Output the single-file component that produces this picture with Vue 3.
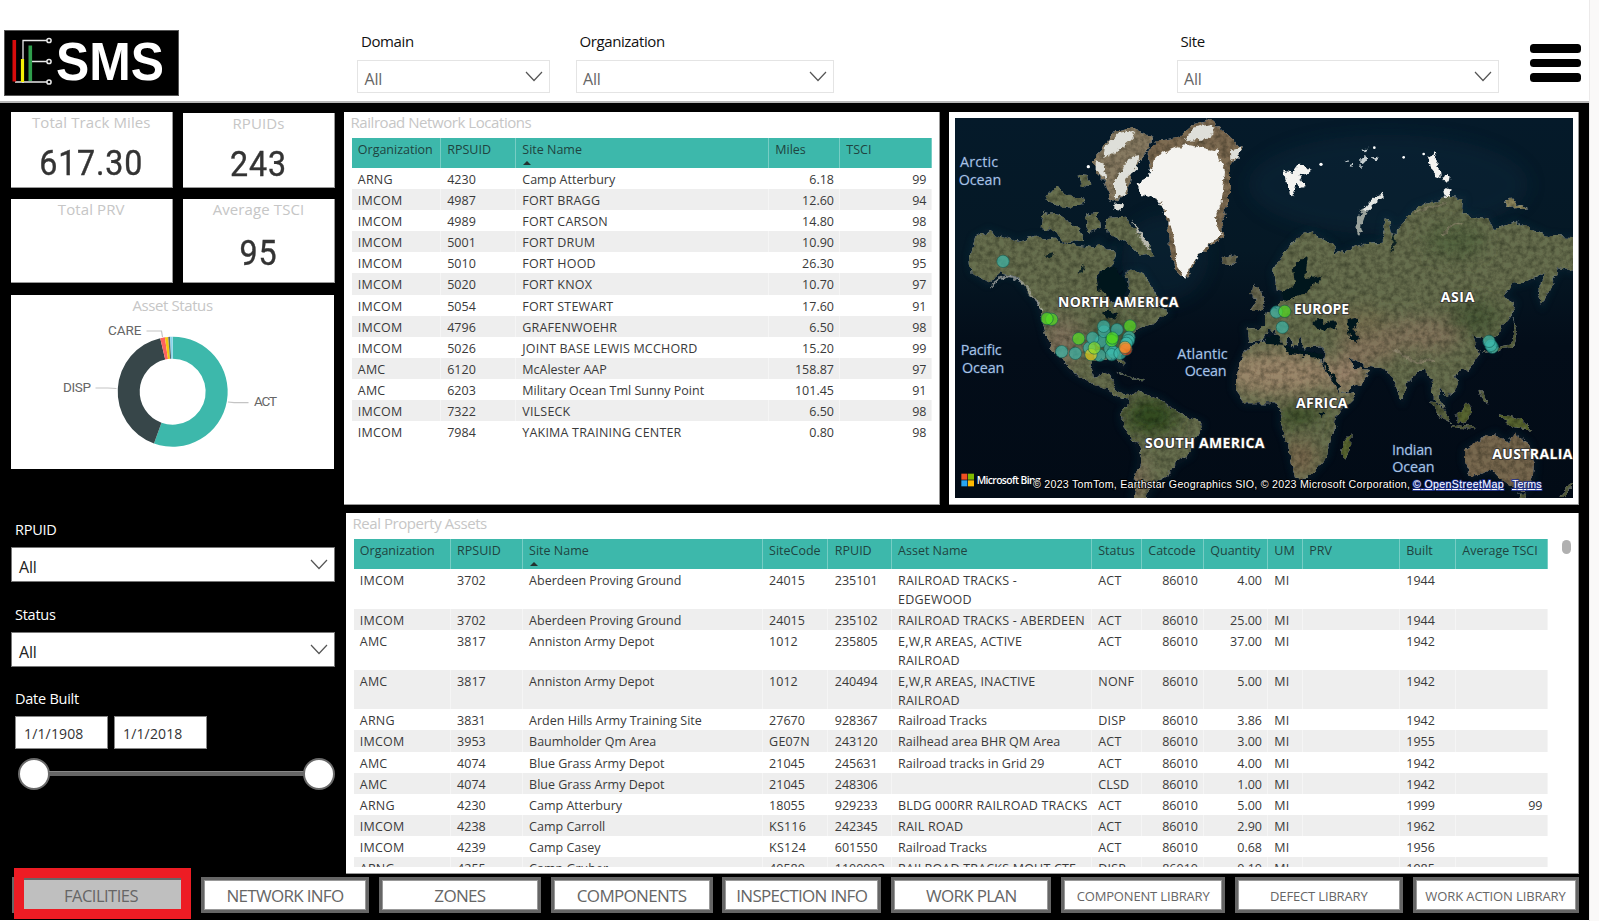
<script setup>
const headerSlicers = [
  { label: 'Domain', cls: 'domain' },
  { label: 'Organization', cls: 'organization' },
  { label: 'Site', cls: 'site' },
]

const cards = [
  { title: 'Total Track Miles', value: '617.30' },
  { title: 'RPUIDs', value: '243' },
  { title: 'Total PRV', value: '' },
  { title: 'Average TSCI', value: '95' },
]

function arc(from, to) {
  const pt = (deg, r) => {
    const a = (deg * Math.PI) / 180
    return `${(161.7 + r * Math.sin(a)).toFixed(2)} ${(96.7 - r * Math.cos(a)).toFixed(2)}`
  }
  const large = to - from > 180 ? 1 : 0
  return `M${pt(from, 55)}A55 55 0 ${large} 1 ${pt(to, 55)}L${pt(to, 33)}A33 33 0 ${large} 0 ${pt(from, 33)}Z`
}
const slices = [
  { d: arc(0, 199.9), color: '#3db8ab' },
  { d: arc(199.9, 346.9), color: '#374649' },
  { d: arc(346.9, 351.8), color: '#fd625e' },
  { d: arc(351.8, 355.3), color: '#f2c80f' },
  { d: arc(355.3, 357.3), color: '#5f6b6d' },
  { d: arc(357.3, 359.9), color: '#8ad4eb' },
]

const networkCols = ['Organization', 'RPSUID', 'Site Name', 'Miles', 'TSCI']
const networkRows = [
  ['ARNG', '4230', 'Camp Atterbury', '6.18', '99'],
  ['IMCOM', '4987', 'FORT BRAGG', '12.60', '94'],
  ['IMCOM', '4989', 'FORT CARSON', '14.80', '98'],
  ['IMCOM', '5001', 'FORT DRUM', '10.90', '98'],
  ['IMCOM', '5010', 'FORT HOOD', '26.30', '95'],
  ['IMCOM', '5020', 'FORT KNOX', '10.70', '97'],
  ['IMCOM', '5054', 'FORT STEWART', '17.60', '91'],
  ['IMCOM', '4796', 'GRAFENWOEHR', '6.50', '98'],
  ['IMCOM', '5026', 'JOINT BASE LEWIS MCCHORD', '15.20', '99'],
  ['AMC', '6120', 'McAlester AAP', '158.87', '97'],
  ['AMC', '6203', 'Military Ocean Tml Sunny Point', '101.45', '91'],
  ['IMCOM', '7322', 'VILSECK', '6.50', '98'],
  ['IMCOM', '7984', 'YAKIMA TRAINING CENTER', '0.80', '98'],
]

const assetCols = ['Organization', 'RPSUID', 'Site Name', 'SiteCode', 'RPUID', 'Asset Name', 'Status', 'Catcode', 'Quantity', 'UM', 'PRV', 'Built', 'Average TSCI']
const assetRows = [
  ['IMCOM', '3702', 'Aberdeen Proving Ground', '24015', '235101', 'RAILROAD TRACKS -\nEDGEWOOD', 'ACT', '86010', '4.00', 'MI', '', '1944', ''],
  ['IMCOM', '3702', 'Aberdeen Proving Ground', '24015', '235102', 'RAILROAD TRACKS - ABERDEEN', 'ACT', '86010', '25.00', 'MI', '', '1944', ''],
  ['AMC', '3817', 'Anniston Army Depot', '1012', '235805', 'E,W,R AREAS, ACTIVE\nRAILROAD', 'ACT', '86010', '37.00', 'MI', '', '1942', ''],
  ['AMC', '3817', 'Anniston Army Depot', '1012', '240494', 'E,W,R AREAS, INACTIVE\nRAILROAD', 'NONF', '86010', '5.00', 'MI', '', '1942', ''],
  ['ARNG', '3831', 'Arden Hills Army Training Site', '27670', '928367', 'Railroad Tracks', 'DISP', '86010', '3.86', 'MI', '', '1942', ''],
  ['IMCOM', '3953', 'Baumholder Qm Area', 'GE07N', '243120', 'Railhead area BHR QM Area', 'ACT', '86010', '3.00', 'MI', '', '1955', ''],
  ['AMC', '4074', 'Blue Grass Army Depot', '21045', '245631', 'Railroad tracks in Grid 29', 'ACT', '86010', '4.00', 'MI', '', '1942', ''],
  ['AMC', '4074', 'Blue Grass Army Depot', '21045', '248306', '', 'CLSD', '86010', '1.00', 'MI', '', '1942', ''],
  ['ARNG', '4230', 'Camp Atterbury', '18055', '929233', 'BLDG 000RR RAILROAD TRACKS', 'ACT', '86010', '5.00', 'MI', '', '1999', '99'],
  ['IMCOM', '4238', 'Camp Carroll', 'KS116', '242345', 'RAIL ROAD', 'ACT', '86010', '2.90', 'MI', '', '1962', ''],
  ['IMCOM', '4239', 'Camp Casey', 'KS124', '601550', 'Railroad Tracks', 'ACT', '86010', '0.68', 'MI', '', '1956', ''],
  ['ARNG', '4255', 'Camp Gruber', '40580', '1100003', 'RAILROAD TRACKS MOUT CTF', 'DISP', '86010', '0.10', 'MI', '', '1985', ''],
]
const rightAligned = [7, 8, 12]
const isCaps = (s) => /[A-Z]/.test(s) && !/[a-z]/.test(s)

const T = '#3db8ab'
const G = '#52e020'
const pins = [
  [144, 430, T], [290, 604, G], [276, 602, G],
  [371, 662, G], [320, 701, T], [361, 706, T],
  [403, 690, T], [434, 712, T], [438, 670, T], [447, 640, T], [446, 625, T], [413, 660, T],
  [486, 635, T], [525, 624, G], [408, 710, '#e8d21a'], [418, 690, '#8fe02a'],
  [465, 692, T], [475, 702, T], [470, 710, T], [495, 706, T], [470, 668, G], [472, 660, G],
  [522, 658, T], [520, 668, T], [514, 676, T], [513, 694, '#ff4a20'], [510, 688, '#ff9a2a'],
  [964, 582, T], [989, 580, G], [982, 628, T],
  [1612, 688, T], [1608, 682, T], [1602, 670, T],
]

const tabs = [
  { text: 'NETWORK INFO' }, { text: 'ZONES' }, { text: 'COMPONENTS' }, { text: 'INSPECTION INFO' }, { text: 'WORK PLAN' },
  { text: 'COMPONENT LIBRARY', small: true }, { text: 'DEFECT LIBRARY', small: true }, { text: 'WORK ACTION LIBRARY', small: true },
]
</script>

<template>
  <div class="page">
    <header class="top">
      <svg class="logo" width="175" height="66" viewBox="0 0 175 66">
        <rect x=".5" y=".5" width="174" height="65" fill="#000" stroke="#555" />
        <path d="M19 53V10.500H43M28 31.500H43M11 52H43" fill="none" stroke="#e8e8e8" stroke-width="1.300" />
        <path d="M10.300 10V51.500" stroke="#d80c0c" stroke-width="3.600" />
        <path d="M18.500 29V52" stroke="#f3ee05" stroke-width="3.200" />
        <path d="M26.300 15.500V51" stroke="#2f9e4c" stroke-width="3.600" />
        <g fill="#000" stroke="#e8e8e8" stroke-width="1.500"><circle cx="45" cy="10.500" r="2.100" /><circle cx="45" cy="31.500" r="2.100" /><circle cx="45" cy="52" r="2.100" /></g>
        <text class="logo-text" x="52" y="49.500" textLength="108" lengthAdjust="spacingAndGlyphs">SMS</text>
      </svg>
      <div v-for="s in headerSlicers" :key="s.label" class="hs" :class="s.cls">
        <span class="hs-label">{{ s.label }}</span>
        <div class="hs-box"><span>All</span><svg width="18" height="11" viewBox="0 0 18 11"><path d="M1 1L9 9.500L17 1" /></svg></div>
      </div>
      <div class="burger"><i></i><i></i><i></i></div>
    </header>

    <main class="body">
      <div class="upper">
        <aside class="side">
          <div class="cards">
            <section v-for="c in cards" :key="c.title" class="card">
              <h3>{{ c.title }}</h3>
              <strong>{{ c.value }}</strong>
            </section>
          </div>
          <section class="donut">
            <h3>Asset Status</h3>
            <svg width="323" height="174" viewBox="0 0 323 174">
              <path v-for="s in slices" :key="s.color" :d="s.d" :fill="s.color" />
              <g fill="none" stroke="#c4c4c4" stroke-width="1.200"><path d="M135.500 36H150.500L151.500 42" /><path d="M84.500 93H97L105.500 93.500" /><path d="M217 107L223 107.700H237.500" /></g>
              <g class="donut-label"><text x="97" y="40" textLength="33.500">CARE</text><text x="52" y="97" textLength="28">DISP</text><text x="243" y="111" textLength="23">ACT</text></g>
            </svg>
          </section>
          <div class="slicer"><label>RPUID</label><div class="select"><span>All</span><svg width="18" height="11" viewBox="0 0 18 11"><path d="M1 1L9 9.500L17 1" /></svg></div></div>
          <div class="slicer status"><label>Status</label><div class="select"><span>All</span><svg width="18" height="11" viewBox="0 0 18 11"><path d="M1 1L9 9.500L17 1" /></svg></div></div>
          <div class="slicer dates">
            <label>Date Built</label>
            <div class="inputs"><span>1/1/1908</span><span>1/1/2018</span></div>
            <div class="slider"><b></b><i></i><b></b></div>
          </div>
        </aside>

        <div class="right">
          <div class="row1">
            <section class="panel network">
              <h2>Railroad Network Locations</h2>
              <div class="grid g1 head">
                <div v-for="(c, i) in networkCols" :key="c">{{ c }}<em v-if="i === 2"></em></div>
              </div>
              <div v-for="(r, n) in networkRows" :key="n" class="grid g1 line" :class="{ band: n % 2 }">
                <div v-for="(c, i) in r" :key="i" :class="{ num: i > 2, caps: isCaps(c) }">{{ c }}</div>
              </div>
            </section>

            <section class="panel map">
              <svg width="618" height="380" viewBox="0 0 1854 1140">
                <defs>
                  <linearGradient id="sea" x1="0" y1="0" x2="0" y2="1"><stop offset="0" stop-color="#051a2a" /><stop offset=".35" stop-color="#051825" /><stop offset=".6" stop-color="#030d19" /><stop offset="1" stop-color="#020b16" /></linearGradient>
                  <filter id="terrain" x="0" y="0" width="1854" height="1140" filterUnits="userSpaceOnUse" color-interpolation-filters="sRGB">
                    <feTurbulence type="fractalNoise" baseFrequency=".035" numOctaves="4" seed="4" result="n" />
                    <feDisplacementMap in="SourceGraphic" in2="n" scale="26" xChannelSelector="R" yChannelSelector="G" result="d" />
                    <feTurbulence type="fractalNoise" baseFrequency=".06" numOctaves="5" seed="9" />
                    <feColorMatrix values="0 .7 0 0 .56  0 .65 0 0 .57  0 .7 0 0 .54  0 0 0 0 1" result="g" />
                    <feBlend in="d" in2="g" mode="multiply" result="m" />
                    <feComposite in="m" in2="d" operator="in" result="c" />
                    <feGaussianBlur in="c" stdDeviation="1.200" />
                  </filter>
                  <filter id="edge" x="0" y="0" width="1854" height="1140" filterUnits="userSpaceOnUse">
                    <feTurbulence type="fractalNoise" baseFrequency=".06" numOctaves="3" seed="7" result="n" />
                    <feDisplacementMap in="SourceGraphic" in2="n" scale="20" xChannelSelector="R" yChannelSelector="G" result="d" />
                    <feGaussianBlur in="d" stdDeviation="1.500" />
                  </filter>
                  <filter id="soft" x="-50%" y="-50%" width="200%" height="200%"><feGaussianBlur stdDeviation="26" /></filter>
                  <filter id="haze" x="-50%" y="-50%" width="200%" height="200%"><feGaussianBlur stdDeviation="10" /></filter>
                  <path id="namerica" d="M60 361L100 339L190 371L240 356L300 366L350 381L410 391L430 372L445 392L480 391L470 441L430 461L425 501L470 546L500 561L520 521L515 461L560 461L600 521L610 556L640 586L590 616L545 636L520 676L500 706L503 753L488 720L450 726L400 726L420 776L460 766L475 796L480 816L518 831L518 846L490 836L460 816L410 796L350 761L320 726L280 676L270 636L250 556L220 521L185 476L140 466L100 496L50 461L45 416Z" />
                  <path id="samerica" d="M518 836L550 821L620 846L670 886L740 916L738 930L710 976L705 1010L660 1036L640 1070L610 1086L580 1126L575 1150H530L555 1016L545 976L505 926L497 891L520 856Z" />
                  <path id="africa" d="M875 691L840 766L840 816L870 856L960 856L980 866L975 916L995 966L1020 1076L1060 1080L1115 1016L1135 936L1140 896L1190 846L1202 819L1155 826L1100 731L1095 711L1000 696L980 666L930 671Z" />
                  <path id="eurasia" d="M955 461L990 401L1030 356L1070 341L1135 381L1137 409L1170 401L1230 376L1280 371L1292 301L1304 305L1310 350L1350 311L1380 271L1475 236L1525 241L1520 291L1600 301L1620 336L1680 311L1780 356L1870 361V461L1810 451L1780 521L1762 560L1750 531L1770 466L1720 490L1670 501L1645 536L1680 556L1670 586L1630 646L1614 660L1616 698L1600 690L1580 661L1555 656L1572 711L1540 756L1500 771L1505 811L1475 836L1450 811L1468 876L1435 836L1430 786L1400 761L1360 796L1342 846L1315 786L1290 751L1230 746L1180 716L1200 751L1245 756L1220 796L1158 824L1130 776L1105 731L1110 685L1045 688L1035 660L1020 692L994 652L988 684L955 640L936 635L920 671L880 671L875 631L930 630L930 596L975 560L1000 525L962 516Z" />
                  <path id="australia" d="M1530 996L1580 966L1620 946L1650 971L1670 971L1680 946L1720 976L1740 1036L1735 1086L1710 1121L1670 1106L1630 1076L1610 1056L1550 1076L1530 1036Z" />
                  <clipPath id="land"><use href="#namerica" /><use href="#samerica" /><use href="#africa" /><use href="#eurasia" /><use href="#australia" /></clipPath>
                </defs>
                <rect width="1854" height="1140" fill="url(#sea)" />
                <g fill="#0d2c3e" opacity=".4" filter="url(#soft)"><ellipse cx="1300" cy="200" rx="420" ry="150" /><ellipse cx="630" cy="420" rx="130" ry="130" /></g>
                <g fill="none" stroke="#0e3342" stroke-width="16" opacity=".35" filter="url(#haze)"><use href="#namerica" /><use href="#samerica" /><use href="#africa" /><use href="#eurasia" /><use href="#australia" /></g>
                <g filter="url(#terrain)">
                  <g fill="#666f4e">
                    <use href="#namerica" /><use href="#samerica" /><use href="#africa" /><use href="#eurasia" /><use href="#australia" fill="#77694f" />
                    <path d="M265 281L310 291L370 331L390 361L340 376L280 331L260 326ZM275 235L300 205L350 235L395 240L380 265L330 270L280 250ZM370 170L400 175L410 205L380 200ZM390 290L430 280L435 330L400 345ZM450 300L510 296L560 351L595 411L560 416L515 371L460 351Z" />
                    <path d="M895 500L915 515L935 565L925 580L885 578L905 550L890 530ZM800 418L825 407L850 422L825 440L805 435Z" fill="#686850" />
                    <path d="M1160 976L1187 946L1185 986L1170 1026L1152 1008ZM1505 890L1540 856L1556 876L1530 916L1505 911ZM1630 890L1700 906L1732 936L1670 926Z" fill="#56642f" />
                    <path d="M1420 846L1440 850L1490 905L1485 915L1460 900ZM1490 918L1565 930L1563 937L1488 925ZM1570 820L1585 830L1600 860L1585 855ZM1580 710L1620 690L1660 680L1676 640L1668 600L1686 640L1674 686L1625 700ZM1810 1140L1830 1115L1854 1100V1110L1825 1140ZM1690 1130L1712 1130L1700 1150Z" fill="#56603f" />
                    <path d="M480 758L520 772L570 784L560 790L500 770Z" fill="#4f5f45" />
                    <path d="M440 91L480 41L530 31L595 56L570 111L530 161L515 231L470 251L450 191L420 161L420 111Z" fill="#867b62" />
                    <path d="M600 71L670 56L710 21L770 6L820 51L860 91L825 141L825 261L800 311L805 356L740 401L690 481L660 451L645 391L640 311L610 246L575 111Z" fill="#7d6c52" />
                    <path d="M1650 248L1670 242L1685 262L1700 258L1720 268L1695 270L1660 272Z" fill="#8e8a60" />
                  </g>
                  <g clip-path="url(#land)" filter="url(#soft)">
                    <ellipse cx="970" cy="765" rx="175" ry="65" fill="#9a876b" /><ellipse cx="1175" cy="770" rx="60" ry="50" fill="#98836a" />
                    <ellipse cx="1240" cy="690" rx="90" ry="42" fill="#85765d" /><ellipse cx="1400" cy="650" rx="120" ry="48" fill="#81745c" /><ellipse cx="1210" cy="610" rx="90" ry="30" fill="#767050" />
                    <ellipse cx="320" cy="670" rx="60" ry="70" fill="#7d715c" /><ellipse cx="1040" cy="1020" rx="45" ry="55" fill="#7c6b50" /><ellipse cx="540" cy="1090" rx="34" ry="70" fill="#84755e" />
                    <ellipse cx="590" cy="895" rx="80" ry="52" fill="#2e491f" /><ellipse cx="1030" cy="890" rx="65" ry="35" fill="#3a4f26" /><ellipse cx="470" cy="650" rx="60" ry="50" fill="#414f36" /><ellipse cx="1500" cy="370" rx="90" ry="50" fill="#526541" /><ellipse cx="1560" cy="600" rx="80" ry="50" fill="#485a39" />
                  </g>
                  <path d="M110 505Q150 460 190 485T260 580" fill="none" stroke="#b4b8ae" stroke-width="7" opacity=".7" />
                  <path d="M1380 285Q1420 270 1480 260M1460 350Q1500 310 1520 320" fill="none" stroke="#8f8c70" stroke-width="8" opacity=".7" />
                  <path d="M1320 690Q1350 735 1440 728" fill="none" stroke="#9a917c" stroke-width="7" opacity=".6" />
                </g>
                <g fill="#05131d" filter="url(#edge)">
                  <path d="M1036 421H1058L1050 481L1100 471L1092 490L1040 528L990 551L980 525L1020 500L1014 450Z" />
                  <path d="M1075 618L1090 600L1110 615L1140 610L1145 630L1090 636ZM1178 606L1200 600L1208 620L1195 635L1212 660L1205 672L1188 665L1178 630Z" />
                  <path d="M930 655L970 650L985 680L1045 700L1110 705L1105 725L1060 715L1000 708L985 680L935 678Z" />
                  <path d="M1103 735L1112 732L1155 805L1150 820ZM425 480L440 455L475 445L500 465L520 500L500 556L460 540L430 515Z" />
                  <path d="M440 585Q460 570 490 590L480 605L455 595ZM1094 886L1104 884L1104 897L1096 900Z" />
                  <path d="M270 410L300 402L296 418L280 424ZM370 465L378 448L390 440L382 462ZM1315 340L1322 370L1312 402L1308 380Z" fill="#0c2024" />
                </g>
                <g fill="#f4f3f0" filter="url(#edge)">
                  <path d="M610 111L690 79L790 99L810 161L800 251L780 301L800 350L740 401L710 441L690 481L665 441L660 361L635 291L610 246L560 231L545 196L580 176L590 141Z" />
                  <path d="M825 98L862 88L850 120L826 130ZM450 85L490 45L540 35L530 65L480 105L445 120ZM520 120L555 110L545 150L510 180L515 230L480 240L480 190ZM425 125L445 140L455 185L425 160ZM475 257L505 255L500 275L475 272ZM710 30L770 18L780 45L740 65L690 70Z" fill="#dedfd9" />
                  <path d="M530 310L550 330L590 395L570 385Z" fill="#b9b9ae" />
                  <path d="M985 155L1000 158L1012 165L1030 140L1055 142L1068 155L1050 172L1030 170L1040 190L1052 200L1044 212L1024 200L1015 235L1005 228L1000 205L988 185ZM1418 118L1436 106L1446 130L1440 145L1458 155L1460 178L1444 172L1430 155ZM1460 190L1472 168L1486 185L1478 198ZM1465 220L1475 210L1490 216L1486 234L1470 240Z" />
                  <path d="M1165 128L1185 124L1180 132ZM1182 142L1198 136L1192 147ZM1212 128L1230 110L1238 125L1218 136ZM1222 95L1238 92L1232 106ZM1250 118L1272 116L1260 130ZM1210 146L1225 144L1218 150Z" fill="#c6ced0" />
                  <path d="M1216 346Q1202 318 1230 275" fill="none" stroke="#99a19b" stroke-width="14" />
                  <path d="M1232 278Q1250 250 1284 232" fill="none" stroke="#e2e5e2" stroke-width="13" />
                </g>
                <g fill="#fff"><circle cx="1098" cy="139" r="5" /><circle cx="1346" cy="118" r="4" /><circle cx="1406" cy="108" r="4" /><circle cx="1258" cy="89" r="4" /><circle cx="400" cy="146" r="5" /></g>
                <g stroke-width="3"><circle v-for="(p, i) in pins" :key="i" :cx="p[0]" :cy="p[1]" r="18.500" :fill="p[2]" class="pin" /></g>
                <g class="ocean">
                  <text x="15" y="148" textLength="114">Arctic</text><text x="11" y="200" textLength="128">Ocean</text>
                  <text x="17" y="712" textLength="123">Pacific</text><text x="21" y="764" textLength="127">Ocean</text>
                  <text x="667" y="723" textLength="151">Atlantic</text><text x="689" y="775" textLength="126">Ocean</text>
                  <text x="1311" y="1010" textLength="122">Indian</text><text x="1312" y="1062" textLength="127">Ocean</text>
                </g>
                <g class="continent">
                  <text x="309" y="566" textLength="361">NORTH AMERICA</text><text x="1017" y="588" textLength="165">EUROPE</text><text x="1457" y="551" textLength="101">ASIA</text>
                  <text x="1023" y="871" textLength="154">AFRICA</text><text x="570" y="991" textLength="358">SOUTH AMERICA</text><text x="1612" y="1024" textLength="240">AUSTRALIA</text>
                </g>
                <g><rect x="19" y="1067" width="18" height="18" fill="#f25022" /><rect x="39" y="1067" width="18" height="18" fill="#7fba00" /><rect x="19" y="1087" width="18" height="18" fill="#29a4ef" /><rect x="39" y="1087" width="18" height="18" fill="#ffb900" /></g>
                <text class="bing" x="65" y="1097" textLength="192">Microsoft Bing</text>
                <g class="credit">
                  <text x="234" y="1110" textLength="1131">© 2023 TomTom, Earthstar Geographics SIO, © 2023 Microsoft Corporation,</text>
                  <text x="1374" y="1110" textLength="272" class="link">© OpenStreetMap</text><text x="1671" y="1110" textLength="89" class="link">Terms</text>
                </g>
              </svg>
            </section>
          </div>

          <section class="panel assets">
            <h2>Real Property Assets</h2>
            <div class="assets-body">
              <div class="scroll">
                <div class="grid g2 head">
                  <div v-for="(c, i) in assetCols" :key="c">{{ c }}<em v-if="i === 2"></em></div>
                </div>
                <div v-for="(r, n) in assetRows" :key="n" class="grid g2 line" :class="{ tall: r[5].includes('\n'), band: n % 2 }">
                  <div v-for="(c, i) in r" :key="i" :class="{ num: rightAligned.includes(i), caps: isCaps(c) }">{{ c }}</div>
                </div>
              </div>
              <span class="thumb"></span>
            </div>
          </section>
        </div>
      </div>

      <nav class="tabs">
        <div class="active"><span>FACILITIES</span></div>
        <div v-for="t in tabs" :key="t.text" class="tab" :class="{ small: t.small }"><span>{{ t.text }}</span></div>
      </nav>
    </main>
  </div>
</template>

<style>
body { background: #faf9f8; overflow: hidden; }
</style>
<style scoped>
.page { width: 1590px; height: 921px; background: #fff; font-family: "Open Sans", "Noto Sans", sans-serif; box-sizing: border-box; border-right: 1px solid #eceaea; }
h2, h3 { margin: 0; font-weight: 400; color: #c6c6c6; font-size: 15px; letter-spacing: -.44px; white-space: nowrap; }
.top { height: 103px; box-sizing: border-box; border-bottom: 2px solid #b8b8b8; display: flex; align-items: flex-start; }
.logo { margin: 30px 0 0 4px; }
.logo-text { font: 700 53px "Liberation Sans", Arial, sans-serif; fill: #fff; }
.hs { margin-top: 30px; }
.hs-label { display: block; height: 22px; line-height: 22px; padding-left: 4px; font-size: 15px; letter-spacing: -.4px; color: #111; }
.hs-box { margin-top: 8px; height: 33px; box-sizing: border-box; border: 1px solid #e4e4e4; display: flex; align-items: center; justify-content: space-between; padding: 4px 6px 0 6.500px; font-size: 16px; letter-spacing: -.2px; color: #666; }
.hs-box svg { margin-top: -4px; }
.hs-box path, .select path { fill: none; stroke: #555; stroke-width: 1.2; }
.domain { margin-left: 178px; width: 193px; }
.organization { margin-left: 25.500px; width: 258px; }
.site { margin-left: 343px; width: 322.500px; }
.burger { margin: 44px 0 0 30.500px; width: 51px; display: flex; flex-direction: column; gap: 6px; }
.burger i { height: 8.500px; border-radius: 3.500px; background: #000; }
.body { width: 1589px; height: 817px; background: #000; }
.upper { display: flex; height: 774px; }
.side { width: 344px; padding: 9px 9px 0 11px; box-sizing: border-box; display: flex; flex-direction: column; }
.cards { display: grid; grid-template-columns: 161.500px 152px; grid-template-rows: 76px 84px; gap: 11px 10.500px; }
.card { background: #fff; text-align: center; border: solid #999; border-width: 0 1px 1px 0; box-sizing: border-box; }
.card h3 { line-height: 21px; letter-spacing: .1px; }
.card:nth-child(2) { margin-top: 1px; }
.card strong { display: block; margin-top: 10px; font: 400 35px/41px Roboto, sans-serif; letter-spacing: .9px; color: #333; transform: scaleX(.92); -webkit-text-stroke: .4px #333; }
.card:nth-child(4) strong { margin-top: 13px; }
.donut { margin-top: 12px; width: 323px; height: 174px; background: #fff; position: relative; }
.donut h3 { position: absolute; top: 0; left: 0; width: 100%; text-align: center; line-height: 21px; letter-spacing: -.4px; }
.donut-label { font: 400 13.500px Roboto, sans-serif; fill: #666; }
.slicer { margin-top: 50px; color: #fff; width: 324px; }
.slicer label { display: block; padding-left: 4px; height: 22px; line-height: 22px; font-size: 14.500px; letter-spacing: -.25px; }
.select { margin-top: 6px; height: 35px; box-sizing: border-box; background: #fff; border: 1px solid #777; display: flex; align-items: center; justify-content: space-between; padding: 4px 6px 0 7px; color: #222; font-size: 16px; letter-spacing: -.2px; }
.select svg { margin-top: -4px; }
.status { margin-top: 22px; }
.dates { margin-top: 21px; }
.inputs { margin: 6px 0 0 4px; display: flex; gap: 6px; }
.inputs span { width: 93px; height: 33px; box-sizing: border-box; background: #fff; border: 1px solid #888; color: #333; font-size: 14px; line-height: 33px; padding-left: 8px; letter-spacing: .15px; }
.slider { margin: 9px 0 0 7px; height: 32px; display: flex; align-items: center; }
.slider b { flex: none; width: 32px; height: 32px; box-sizing: border-box; border: 2px solid #6a6a6a; border-radius: 50%; background: #fff; }
.slider i { flex: 1; height: 5px; background: #666; margin: -1px -1px 0; border-top: 1px solid #888; box-sizing: border-box; }
.right { width: 1235px; padding-top: 9px; }
.row1 { display: flex; gap: 9px; height: 393px; }
.panel { background: #fff; box-sizing: border-box; border: solid #999; border-width: 0 1px 1px 0; }
.network { width: 596px; padding: 0 0 0 7.500px; }
.panel h2 { height: 26px; line-height: 21px; margin-left: -1px; }
.map { width: 630px; padding: 6px; }
.map svg { display: block; overflow: hidden; }
.grid { display: grid; width: max-content; font-size: 12.500px; color: #3a3a3a; }
.grid > div { box-sizing: border-box; padding: 1px 6px 0 6.300px; line-height: 21px; white-space: pre; overflow: hidden; border-right: 1px solid rgba(255, 255, 255, .4); }
.grid > .caps { letter-spacing: .2px; }
.g1 { grid-template-columns: 89.400px 75.100px 253px 71px 92.500px; }
.band { background: #eee; }
.line { height: 21.100px; }
.head { height: 30px; background: #3db8ab; }
.grid.head { color: #1f4440; }
.grid.head > div { line-height: 23px; padding-top: 0; position: relative; border-right-color: rgba(255, 255, 255, .3); }
.head em { position: absolute; left: 7px; top: 23px; border: 4px solid transparent; border-top: 0; border-bottom: 4px solid #24312f; }
.grid > .num { text-align: right; padding-right: 5px; }
.assets { margin: 8px 0 0 2px; width: 1233px; height: 361px; padding-left: 7.500px; }
.assets-body { display: flex; gap: 13.500px; }
.scroll { height: 328px; overflow: hidden; width: 1195px; }
.thumb { width: 9px; height: 14px; border-radius: 4.500px; background: #b0b0b0; margin-top: 1px; }
.g2 { grid-template-columns: 97.300px 72px 240px 65.700px 63.300px 200.200px 50px 62px 64px 35px 97px 56px 92.500px; }
.g2.line.tall { height: 39.750px; }
.g2.line.tall > div { line-height: 19px; padding-top: 2px; }
.ocean text { font-size: 43px; fill: #a9c3e6; stroke: #1d3450; stroke-width: 3px; paint-order: stroke; }
.continent text { font-size: 42px; font-weight: 700; fill: #fff; stroke: #333; stroke-width: 5px; paint-order: stroke; }
.bing { font-size: 31px; fill: #fff; font-weight: 600; }
.credit text { font: 32px "Liberation Sans", Arial, sans-serif; fill: #fff; stroke: #000; stroke-width: 5px; paint-order: stroke; }
.credit .link { text-decoration: underline; stroke: #1c2f8a; }
.pin { fill-opacity: .68; stroke: rgba(15, 90, 80, .55); }
.tabs { height: 43px; display: grid; grid-template-columns: 177px 168.500px 162px 162px 159px 160.500px 164px 168px 166px; padding-left: 14px; width: 1564.500px; justify-content: space-between; box-sizing: content-box; }
.tab { height: 36px; box-sizing: border-box; border: 3px solid #666; background: #fff; display: flex; align-items: center; justify-content: center; font-size: 17px; letter-spacing: -.7px; color: #666; box-shadow: inset 0 0 0 1px #999; white-space: nowrap; }
.tab.small { font-size: 13px; letter-spacing: -.16px; padding-top: 1px; }
.tab.small:last-child { letter-spacing: -.1px; }
.active { position: relative; height: 51px; margin-top: -9px; box-sizing: border-box; border: 10px solid #ed1c24; background: #bfbfbf; display: flex; align-items: center; justify-content: center; font-size: 16.500px; letter-spacing: -.5px; color: #666; box-shadow: inset 0 2px 0 #666; padding: 3px 3px 0 0; }
.active::before { content: ""; position: absolute; left: -12px; top: -1px; width: 2px; height: 36px; background: #666; }
</style>
